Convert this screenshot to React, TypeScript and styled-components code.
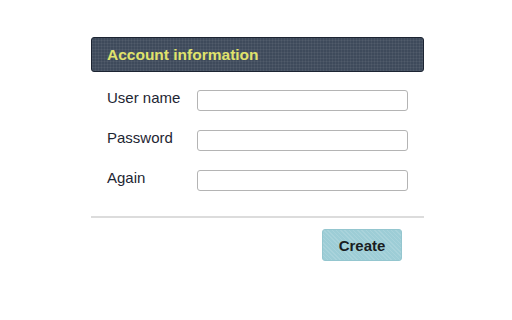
import React from "react";
import styled, { createGlobalStyle } from "styled-components";

const Global = createGlobalStyle`
  html, body { margin: 0; padding: 0; background: #ffffff; }
  body { font-family: "Liberation Sans", Arial, sans-serif; }
`;

const Page = styled.div`
  padding: 37px 0 0 91px;
`;

const Panel = styled.div`
  width: 333px;
  display: flex;
  flex-direction: column;
`;

const Header = styled.div`
  box-sizing: border-box;
  height: 35px;
  display: flex;
  align-items: center;
  padding-left: 15px;
  border: 1px solid #1c2432;
  border-radius: 3px;
  background-color: #3e4a5b;
  background-image:
    repeating-linear-gradient(0deg, rgba(255,255,255,0.05) 0 1px, transparent 1px 3px),
    repeating-linear-gradient(90deg, rgba(255,255,255,0.05) 0 1px, transparent 1px 3px);
`;

const Title = styled.h2`
  margin: 0;
  font-size: 15.5px;
  font-weight: bold;
  color: #e0e36c;
`;

const Fields = styled.div`
  display: flex;
  flex-direction: column;
  gap: 19px;
  padding: 18px 16px 0 16px;
`;

const Row = styled.label`
  display: flex;
  align-items: flex-start;
`;

const Label = styled.span`
  width: 90px;
  font-size: 15px;
  line-height: 17px;
  color: #1e2633;
  margin-top: -1px;
`;

const Input = styled.input`
  box-sizing: border-box;
  width: 211px;
  height: 21px;
  margin: 0;
  border: 1px solid #b4b4b4;
  border-radius: 3px;
  background: #ffffff;
  outline: none;
`;

const Divider = styled.hr`
  margin: 25px 0 0 0;
  border: none;
  height: 2px;
  background: #dcdcdc;
`;

const Actions = styled.div`
  display: flex;
  justify-content: flex-end;
  padding: 11px 22px 0 0;
`;

const Button = styled.button`
  box-sizing: border-box;
  width: 80px;
  height: 32px;
  border: 1px solid #94c6cf;
  border-radius: 3px;
  background-color: #9dcdd6;
  background-image: repeating-linear-gradient(
    45deg,
    rgba(255,255,255,0.12) 0 1px,
    transparent 1px 3px
  );
  font-family: "Liberation Sans", Arial, sans-serif;
  font-size: 15px;
  font-weight: bold;
  color: #1a1d22;
  cursor: pointer;
`;

const fields = ["User name", "Password", "Again"];

export default function App() {
  return (
    <>
      <Global />
      <Page>
        <Panel>
          <Header>
            <Title>Account information</Title>
          </Header>
          <Fields>
            {fields.map((f) => (
              <Row key={f}>
                <Label>{f}</Label>
                <Input type={f === "User name" ? "text" : "password"} />
              </Row>
            ))}
          </Fields>
          <Divider />
          <Actions>
            <Button>Create</Button>
          </Actions>
        </Panel>
      </Page>
    </>
  );
}
